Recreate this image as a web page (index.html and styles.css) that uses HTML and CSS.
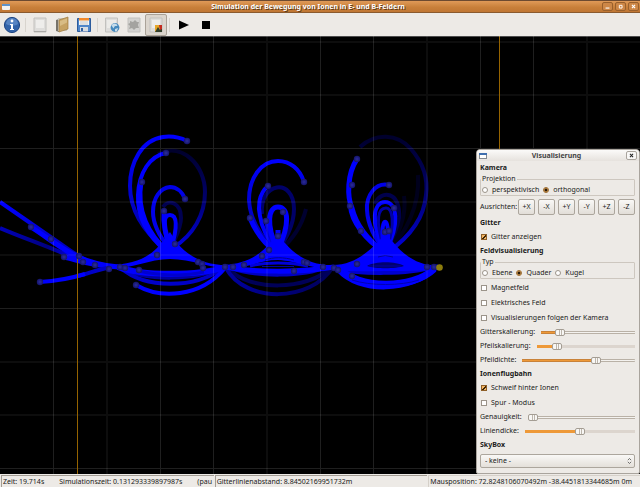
FILE: index.html
```html
<!DOCTYPE html>
<html lang="de">
<head>
<meta charset="utf-8">
<title>Simulation der Bewegung von Ionen in E- und B-Feldern</title>
<link rel="stylesheet" href="styles.css">
</head>
<body>
<header class="titlebar">
  <svg class="winicon" viewBox="0 0 8 6" aria-hidden="true"><rect width="8" height="6" rx="1" fill="#f4f3ef"/><rect width="8" height="2" fill="#5f93c9"/></svg>
  <h1>Simulation der Bewegung von Ionen in E- und B-Feldern</h1>
  <div class="winbuttons">
    <button aria-label="Minimieren"><svg viewBox="0 0 11 9"><path d="M3 6.5h5" stroke="#fff" stroke-width="1.4"/></svg></button>
    <button aria-label="Maximieren"><svg viewBox="0 0 11 9"><path d="M4 3h3.5v3.5H4z" fill="none" stroke="#fff" stroke-width="1.2"/></svg></button>
    <button aria-label="Schließen"><svg viewBox="0 0 11 9"><path d="M3.5 2.5l4 4m0-4l-4 4" stroke="#fff" stroke-width="1.5"/></svg></button>
  </div>
</header>
<nav class="toolbar">
  <button aria-label="Info"><svg viewBox="0 0 18 18"><circle cx="9" cy="9" r="7.6" fill="#3263a8" stroke="#1f4684"/><path d="M3 8a6 6 0 0 1 12 0c-3 2-8 2-12 0z" fill="#6f9bd3" opacity=".6"/><circle cx="9" cy="5" r="1.4" fill="#fff"/><path d="M7 8h3v5h1v1H7v-1h1V9H7z" fill="#fff"/></svg></button>
  <span class="sep"></span>
  <button aria-label="Neu"><svg viewBox="0 0 18 18"><path d="M3 2h12v14H3z" fill="#dedddb" stroke="#c2c1be"/><path d="M5 4h8v8H5z" fill="#eeedeb"/><path d="M3 15.5h12" stroke="#aaa9a6"/></svg></button>
  <button aria-label="Öffnen"><svg viewBox="0 0 18 18"><path d="M3 4l3-1v13l-3-1z" fill="#77736a"/><path d="M5 2h9v13H5z" fill="#c9c6bd"/><path d="M6 4l9-3v12l-9 3z" fill="#c6a263" stroke="#a07c40" stroke-width=".7"/><path d="M7 5l7-2.4v4L7 10z" fill="#d8bc85"/></svg></button>
  <button aria-label="Speichern"><svg viewBox="0 0 18 18"><path d="M2.5 2.500h13v13h-13z" fill="#4f86c9" stroke="#2c5b9c"/><path d="M4 2h10v7H4z" fill="#f5f5f4"/><path d="M4 2h10v2.500H4z" fill="#f28a2c"/><path d="M5 6h8M5 8h8" stroke="#b9bcc2" stroke-width=".8"/><path d="M5 11h8v4.500H5z" fill="#d9dde2"/><path d="M6 12h2v3H6z" fill="#2f5f9f"/></svg></button>
  <span class="sep"></span>
  <button aria-label="Szene laden"><svg viewBox="0 0 18 18"><path d="M2.500 2h12v14h-12z" fill="#dedddb" stroke="#c2c1be"/><path d="M4 4h9v8H4z" fill="#ecebe8"/><circle cx="12" cy="11.500" r="4.400" fill="#4689bd"/><path d="M8.500 9.500c2-3 5-2 6 0-1 1-2 0-3 1l-1 2zM12 13l3-1-1 3-2 .5z" fill="#c6dcea"/></svg></button>
  <button aria-label="Einstellungen"><svg viewBox="0 0 18 18"><path d="M3 2h12v14H3z" fill="#d3d2d0" stroke="#c2c1be"/><path d="M5 5l3 1 2-2 2 2 2 0-1 3 1 3-3 0-2 2-2-2-3 1 1-3-2-2 2-1z" fill="#a4a3a0"/></svg></button>
  <button class="pressed" aria-label="Visualisierung" aria-pressed="true"><svg viewBox="0 0 18 18"><path d="M3 2h12v14H3z" fill="#dfdedb" stroke="#c2c1be"/><path d="M5 4h8v8H5z" fill="#eeedeb"/><path d="M8 9h7v7H8z" fill="#e6a72a"/><path d="M12 9h3v5h-2z" fill="#c32b20"/><path d="M8 16l3-5 2 3 2-1v3z" fill="#33402b"/></svg></button>
  <span class="sep"></span>
  <button aria-label="Start"><svg viewBox="0 0 18 18"><path d="M4 4.500l10 4.500-10 4.500z" fill="#000"/></svg></button>
  <button aria-label="Stopp"><svg viewBox="0 0 18 18"><path d="M5 5h8v8H5z" fill="#000"/></svg></button>
</nav>

<main class="stage">
<svg class="scene" viewBox="0 36 640 438" preserveAspectRatio="xMinYMin slice" role="img" aria-label="Ionenbahnen">
  <defs>
    <radialGradient id="ion"><stop offset="0" stop-color="#2c2c9c"/><stop offset="1" stop-color="#14146a"/></radialGradient>
    <linearGradient id="tail" x1="0" y1="0" x2="0" y2="1"><stop offset="0" stop-color="#0000ff"/><stop offset=".4" stop-color="#0000d8"/><stop offset="1" stop-color="#0000a0"/></linearGradient>
    <linearGradient id="fade" x1="0" y1="0" x2="0" y2="1"><stop offset="0" stop-color="#00002c"/><stop offset=".5" stop-color="#00006c"/><stop offset="1" stop-color="#0000e0"/></linearGradient>
    <linearGradient id="far" x1="0" y1="0" x2="1" y2="0"><stop offset="0" stop-color="#0000b8"/><stop offset=".6" stop-color="#000080"/><stop offset="1" stop-color="#0000ff"/></linearGradient>
    <linearGradient id="dim" x1="0" y1="0" x2="1" y2="0"><stop offset="0" stop-color="#0000a0"/><stop offset="1" stop-color="#000058"/></linearGradient>
    <circle id="p" r="3.200" fill="url(#ion)"/>
  </defs>
  <rect y="36" width="640" height="451" fill="#000"/>
  <g fill="none" stroke-linecap="butt">
    <g stroke="#0000ff" stroke-width="4">
      <path stroke="url(#tail)" d="M0 202L52 238C73 252 86 265 112 267"/>
      <path stroke="url(#far)" d="M0 228C26 239 50 247 79 260"/>
      <path stroke-width="5" d="M31 227C62 247 76 263 118 267M64 257C78 260 90 266 120 267"/>
      <path stroke="#0000c8" d="M78 276C90 273 99 269 112 267"/><path d="M40 282C58 281 72 278 85 274"/>
    </g>
    <g stroke="#0000ff" stroke-width="4">
      <path stroke="url(#fade)" d="M158 154C182 142 205 165 205 192C205 215 193 235 174 247"/>
      <path stroke="url(#tail)" d="M187 141C179 137 170 136 163 137C142 140 130 162 130 186C130 212 144 232 166 250"/>
      <path d="M166 153C150 156 139 172 138 195C137 220 150 238 167 252"/>
      <path stroke-width="5" d="M141 182C136 210 148 235 168 252"/>
      <path stroke="#000050" d="M163 207C168 199 181 202 181 218C181 228 176 236 171 248"/>
      <path stroke="#0000e8" d="M185 199C182 191 176 187 170 187C160 188 153 198 153 212C153 225 160 237 169 248"/>
      <path stroke-width="5" d="M164 211C163 225 166 237 171 248"/>
      <path d="M169 249C162 223 164 215 170 215C177 215 178 226 171 249"/>
      <path stroke="#0000a0" d="M122 268C145 281 195 281 223 267"/>
      <path stroke="#0000c8" d="M121 268C145 289 195 289 223 268"/>
      <path d="M136 285C160 299 200 298 225 268"/>
      <path stroke-width="6" d="M118 267C142 276 198 276 226 267"/>
      <path stroke="#0000d0" stroke-width="3" d="M139 271C160 276 185 276 204 272"/>
    </g>
    <path fill="#0000ff" d="M108 265C137 265 153 255 164 240L170 232L177 243C190 258 207 266 230 265V269C210 268 192 259 170 259C149 259 133 269 108 269Z"/>
    <g stroke="#0000ff" stroke-width="4">
      <path stroke="#000030" d="M306 209C302 225 292 240 280 250"/>
      <path stroke="#000068" d="M262 214C259 182 294 177 294 209C294 226 285 240 277 252"/>
      <path stroke="url(#tail)" d="M304 182C300 169 290 161 278 161C261 161 249 178 249 200C250 220 262 238 276 251"/>
      <path stroke-width="5" d="M250 218C257 235 266 245 277 253"/>
      <path d="M268 186C258 194 258 208 260 216C262 230 270 242 277 250"/>
      <path stroke="#0000d8" d="M266 221C268 233 272 242 277 250"/>
      <path stroke-width="5" d="M277 249C266 225 268 207 278 207C289 207 290 225 278 249"/>
      <path d="M278 230L278 250" stroke-width="5"/>
      <path stroke="#000058" d="M229 269C248 291 308 291 330 268"/>
      <path stroke="url(#dim)" d="M226 268C245 303 310 303 333 267"/>
      <path stroke="#0000c0" d="M231 268C255 277 304 277 326 267"/>
      <path stroke-width="5" d="M226 267C250 272 300 273 334 267"/>
      <path stroke="#0000d8" stroke-width="3" d="M250 266C265 262 290 262 308 266"/>
      <path stroke="#0000a0" stroke-width="1" d="M262 266.500H294"/>
    </g>
    <path fill="#0000ff" d="M223 265C246 264 260 255 270 243L278 237L285 243C298 258 314 266 334 265V269C307 268 297 261 278 260C258 260 247 269 223 269Z"/>
    <path stroke="#000090" stroke-width="1" d="M265 260C273 257 284 257 294 260"/>
    <g stroke="#0000ff" stroke-width="4">
      <path stroke="#00001c" d="M418 175C420 205 406 234 388 250M404 196C407 215 398 238 387 250"/>
      <path stroke="url(#fade)" d="M360 147C375 133 397 133 411 149C424 164 428 180 426 195C424 220 408 238 388 252"/>
      <path stroke-width="5" d="M357 159C347 174 347 197 352 208C356 225 368 240 384 252"/>
      <path d="M350 206C351 222 366 241 383 251"/>
      <path stroke="#00004c" d="M375 204C380 190 401 190 399 218C397 230 392 240 386 250"/>
      <path stroke="#0000e8" d="M389 185C375 182 366 196 367 210C368 228 376 240 385 250"/>
      <path d="M385 250C369 222 374 202 385 202C397 202 400 224 386 250"/>
      <path stroke="#0000a8" stroke-width="3" d="M384 248C374 218 379 208 386 208C392 208 396 222 387 248"/>
      <path d="M384 248C378 213 392 213 387 248"/>
      <path stroke="#0000d0" d="M338 269C358 274 408 275 432 267"/>
      <path stroke-width="5" d="M334 268C355 269 415 269 438 267"/>
      <path stroke-width="7" d="M338 268C358 289 412 290 434 269"/>
      <path d="M338 270C358 294 412 293 436 268"/>
      <path stroke="#0000b0" stroke-width="1" d="M352 280C370 286 401 286 419 280"/>
    </g>
    <path fill="#0000ff" d="M330 265C353 266 368 252 378 242L385 234L393 242C405 257 420 266 439 266V268H330Z"/>
    <path fill="#000070" d="M367 266C375 261 396 261 404 266C396 269 375 269 367 266Z"/>
    <path stroke="#0000a0" stroke-width="1" d="M378 257Q385 254 393 257M369 266H401"/>
  </g>
  <g stroke="#fff" stroke-width="1">
    <path opacity=".12" d="M53.500 36V487M160.500 36V487M213.500 36V487M320.500 36V487M373.500 36V487M480.500 36V487M533.500 36V487M0 148.500H640M0 308.500H640M0 468.500H640"/>
    <path opacity=".05" stroke-width="2" d="M107 36V487M267 36V487M427 36V487M587 36V487M0 42H640M0 95H640M0 202H640M0 255H640M0 362H640M0 415H640"/>
    <path stroke="#956300" d="M77.500 36V487M499.500 36V487"/>
    <path opacity=".3" d="M0 36.500H640"/>
  </g>
  <g>
    <use href="#p" x="31" y="227"/><use href="#p" x="51" y="239"/><use href="#p" x="79" y="256"/><use href="#p" x="64" y="257"/><use href="#p" x="83" y="262"/><use href="#p" x="95" y="265"/><use href="#p" x="109" y="269"/><use href="#p" x="120" y="267"/><use href="#p" x="125" y="268"/><use href="#p" x="139" y="270"/><use href="#p" x="136" y="285"/><use href="#p" x="40" y="282"/><use href="#p" x="157" y="255"/><use href="#p" x="175" y="244"/><use href="#p" x="198" y="262"/><use href="#p" x="202" y="264"/><use href="#p" x="203" y="268"/><use href="#p" x="225" y="267"/><use href="#p" x="187" y="141"/><use href="#p" x="166" y="153"/><use href="#p" x="142" y="182"/><use href="#p" x="185" y="199"/><use href="#p" x="164" y="211"/>
    <use href="#p" x="304" y="182"/><use href="#p" x="268" y="186"/><use href="#p" x="250" y="218"/><use href="#p" x="266" y="221"/><use href="#p" x="283" y="212"/><use href="#p" x="278" y="236"/><use href="#p" x="269" y="250"/><use href="#p" x="262" y="256"/><use href="#p" x="244" y="265"/><use href="#p" x="233" y="267"/><use href="#p" x="294" y="271"/><use href="#p" x="304" y="262"/><use href="#p" x="307" y="263"/><use href="#p" x="323" y="267"/>
    <use href="#p" x="357" y="159"/><use href="#p" x="352" y="185"/><use href="#p" x="350" y="206"/><use href="#p" x="361" y="231"/><use href="#p" x="389" y="185"/><use href="#p" x="394" y="208"/><use href="#p" x="385" y="232"/><use href="#p" x="389" y="231"/><use href="#p" x="357" y="264"/><use href="#p" x="352" y="276"/><use href="#p" x="334" y="268"/><use href="#p" x="338" y="270"/><use href="#p" x="427" y="267"/><use href="#p" x="434" y="267"/>
    <circle cx="439.500" cy="267.500" r="3.300" fill="#8c7c0c"/>
  </g>
</svg>

<section class="dialog" aria-labelledby="dlg">
  <div class="dialog-title">
    <svg class="winicon" viewBox="0 0 8 6" aria-hidden="true"><rect x=".5" y=".5" width="7" height="5" fill="#fff" stroke="#83898f"/><rect width="8" height="2" fill="#3f6fae"/></svg>
    <h2 id="dlg">Visualisierung</h2>
    <button aria-label="Schließen"><svg viewBox="0 0 11 9"><path d="M3.500 2.500l4 4m0-4l-4 4" stroke="#222" stroke-width="1.300"/></svg></button>
  </div>
  <form class="dialog-body">
    <h3>Kamera</h3>
    <fieldset><legend>Projektion</legend>
      <label><input type="radio" name="proj">perspektivisch</label>
      <label><input type="radio" name="proj" checked>orthogonal</label>
    </fieldset>
    <div class="align"><span>Ausrichten:</span><div class="axes">
      <button type="button">+X</button><button type="button">-X</button><button type="button">+Y</button><button type="button">-Y</button><button type="button">+Z</button><button type="button">-Z</button></div></div>
    <h3>Gitter</h3>
    <label class="check"><input type="checkbox" checked>Gitter anzeigen</label>
    <h3>Feldvisualisierung</h3>
    <fieldset><legend>Typ</legend>
      <label><input type="radio" name="typ">Ebene</label>
      <label><input type="radio" name="typ" checked>Quader</label>
      <label><input type="radio" name="typ">Kugel</label>
    </fieldset>
    <label class="check"><input type="checkbox">Magnetfeld</label>
    <label class="check"><input type="checkbox">Elektrisches Feld</label>
    <label class="check"><input type="checkbox">Visualisierungen folgen der Kamera</label>
    <label class="slide">Gitterskalierung:<input type="range" value="17" style="--v:23%"></label>
    <label class="slide flat">Pfeilskalierung:<input type="range" value="18" style="--v:23%"></label>
    <label class="slide">Pfeildichte:<input type="range" value="67" style="--v:65%"></label>
    <h3>Ionenflugbahn</h3>
    <label class="check"><input type="checkbox" checked>Schweif hinter Ionen</label>
    <label class="check"><input type="checkbox">Spur - Modus</label>
    <label class="slide">Genauigkeit:<input type="range" value="0" style="--v:1%"></label>
    <label class="slide flat">Liniendicke:<input type="range" value="50" style="--v:50%"></label>
    <h3><label for="sky">SkyBox</label></h3>
    <div class="combo"><select id="sky"><option>- keine -</option></select>
      <svg viewBox="0 0 6 8" aria-hidden="true"><path d="M1 3l2-2 2 2M1 5l2 2 2-2" fill="none" stroke="#555"/></svg></div>
  </form>
</section>
</main>

<footer class="status">
  <div class="cell times"><span>Zeit: 19.714s</span><span>Simulationszeit: 0.131293339897987s</span><span>(pau</span></div>
  <div class="cell">Gitterlinienabstand: 8.84502169951732m</div>
  <div class="cell mouse">Mausposition: 72.8248106070492m -38.4451813344685m 0m</div>
</footer>
</body>
</html>
```
FILE: styles.css
```css
* { box-sizing: border-box; }
body {
  margin: 0;
  height: 100vh;
  display: flex;
  flex-direction: column;
  overflow: hidden;
  background: #edeae6;
  color: #1a1a1a;
  font: 7px/10px "Noto Sans", "DejaVu Sans", sans-serif;
}
h1, h2, h3 { margin: 0; font-size: 7px; font-weight: bold; }
button, input, select { font: inherit; color: inherit; margin: 0; padding: 0; }
svg { display: block; }

.titlebar {
  flex: none;
  height: 13px;
  display: flex;
  align-items: center;
  padding: 0 1px 0 2px;
  background: linear-gradient(#6d4a30 0 1px, #e09a58 1px, #c9803a 55%, #c07633 92%, #8a5a2e 92%);
}
.titlebar h1 {
  flex: 1;
  text-align: center;
  padding-left: 4px;
  color: #fff;
  text-shadow: 1px 1px 0 #5e3a18;
}
.winicon { width: 8px; height: 6px; flex: none; }
.winbuttons { display: flex; gap: 2px; }
.winbuttons button {
  width: 11px;
  height: 9px;
  border: 1px solid #99602c;
  border-radius: 2px;
  background: #cd8747;
}
.winbuttons svg { width: 9px; height: 7px; }

.toolbar {
  flex: none;
  height: 23px;
  display: flex;
  align-items: center;
  padding-left: 1px;
  background: #edeae6;
}
.toolbar button {
  width: 22px;
  height: 22px;
  display: grid;
  place-items: center;
  border: 1px solid transparent;
  border-radius: 2px;
  background: none;
}
.toolbar svg { width: 18px; height: 18px; }
.toolbar .pressed { border-color: #aaa298; background: #dbd5cd; }
.sep { width: 1px; height: 14px; margin: 0 3px 0 2px; background: #d8d4ce; }

.stage { flex: 1; min-height: 0; position: relative; background: #000; }
.scene { width: 100%; height: 100%; }

.dialog {
  position: absolute;
  right: 0;
  bottom: 0;
  width: 164px;
  background: #edeae6;
  border: 1px solid #a9a49d;
  border-radius: 4px 4px 2px 2px;
}
.dialog-title {
  height: 11px;
  display: flex;
  align-items: center;
  padding: 0 2px 0 2px;
  background: linear-gradient(#fbfaf9, #e6e2dd);
  border-radius: 3px 3px 0 0;
}
.dialog-title h2 { flex: 1; text-align: center; color: #444; }
.dialog-title button {
  width: 11px;
  height: 9px;
  border: 1px solid #a9a49d;
  border-radius: 2px;
  background: #f8f7f6;
}
.dialog-title button svg { width: 9px; height: 7px; }
.dialog-body {
  display: flex;
  flex-direction: column;
  padding: 0 4px 5px 3px;
}
h3 { height: 13px; line-height: 13px; }
fieldset {
  position: relative;
  height: 17px;
  margin: 5px 0 1px;
  padding: 5px 1px 0;
  border: 1px solid #cdc7bf;
  border-radius: 1px;
  display: flex;
  gap: 4px;
}
legend {
  position: absolute;
  left: 0;
  top: -5px;
  padding: 0 1px;
  line-height: 8px;
  background: #edeae6;
}
fieldset label { display: flex; align-items: center; gap: 4px; height: 10px; }
input { appearance: none; flex: none; }
input[type="radio"] {
  width: 6px;
  height: 6px;
  border: 1px solid #9b948a;
  border-radius: 50%;
  background: #fff;
}
input[type="radio"]:checked {
  border-color: #9a6a30;
  background: radial-gradient(circle, #2a1a08 0 1px, #f3b562 2px);
}
.align { display: flex; justify-content: space-between; align-items: center; height: 19px; }
.axes { display: flex; gap: 3px; }
.axes button {
  width: 17px;
  height: 16px;
  border: 1px solid #aca69d;
  border-radius: 2px;
  background: linear-gradient(#f9f8f6, #e2ded8);
}
.check { display: flex; align-items: center; gap: 4px; height: 15px; padding-left: 1px; }
.check input {
  width: 6px;
  height: 6px;
  border: 1px solid #9b948a;
  background: #fff;
}
.check input:checked {
  border-color: #8e5f28;
  background: linear-gradient(135deg, #f3b562 45%, #3a2408 45% 65%, #f3b562 65%);
}
.slide { display: flex; align-items: center; gap: 6px; height: 14px; }
.slide input {
  flex: 1;
  min-width: 0;
  height: 8px;
  background: linear-gradient(to right, #ee9938 var(--v), #f4f2ef var(--v)) center / 100% 1px no-repeat,
    linear-gradient(to right, #c98238 var(--v), #b9b1a6 var(--v)) center / 100% 3px no-repeat;
}
.slide.flat input {
  background: linear-gradient(to right, #ee9938 var(--v), #dcd5ce var(--v)) center / 100% 3px no-repeat;
}
.slide input::-webkit-slider-thumb {
  appearance: none;
  width: 10px;
  height: 7px;
  border: 1px solid #a49d93;
  border-radius: 2px;
  background: linear-gradient(to right, transparent 3px, #bdb6ac 3px 4px, transparent 4px 5px, #bdb6ac 5px 6px, transparent 6px), #f8f7f5;
}
.combo { position: relative; margin-top: 3px; }
.combo select {
  display: block;
  appearance: none;
  width: 100%;
  height: 14px;
  padding: 0 4px;
  border: 1px solid #aca69d;
  border-radius: 2px;
  background: linear-gradient(#f9f8f6, #e4e0da);
}
.combo svg { position: absolute; right: 3px; top: 3px; width: 5px; height: 8px; }

.status {
  flex: none;
  height: 13px;
  display: grid;
  grid-template-columns: 213fr 213fr 212fr;
  gap: 1px;
  padding: 1px 0 0 1px;
}
.cell {
  min-width: 0;
  overflow: hidden;
  white-space: nowrap;
  padding-left: 1px;
  border-top: 1px solid #a39d94;
  border-left: 1px solid #a39d94;
  line-height: 11px;
}
.times { display: flex; gap: 15px; }
.times span { flex: none; }
.mouse { border-color: #d5d0c9; }
```
